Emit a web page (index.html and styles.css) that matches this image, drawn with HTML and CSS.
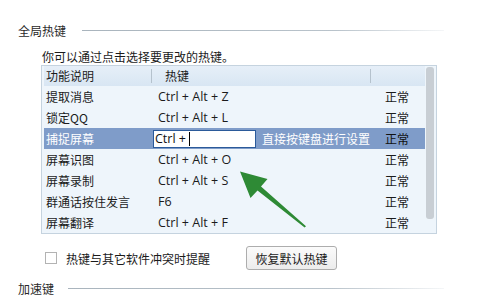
FILE: index.html
```html
<!DOCTYPE html>
<html lang="zh-CN">
<head>
<meta charset="utf-8">
<link rel="stylesheet" href="styles.css">
</head>
<body>
<div class="page">
  <div class="group-head first"><span class="group-title">全局热键</span><span class="group-line"></span></div>
  <div class="hint">你可以通过点击选择要更改的热键。</div>
  <div class="table">
    <div class="list">
      <div class="thead">
        <div class="hc c1">功能说明</div>
        <div class="hc c2">热键</div>
        <div class="hc c3"></div>
      </div>
      <div class="row"><div class="c1">提取消息</div><div class="c2 key">Ctrl + Alt + Z</div><div class="c3">正常</div></div>
      <div class="row"><div class="c1">锁定QQ</div><div class="c2 key">Ctrl + Alt + L</div><div class="c3">正常</div></div>
      <div class="row selected"><div class="c1">捕捉屏幕</div><div class="c2 editcell"><div class="edit"><span class="key">Ctrl + </span><span class="caret"></span></div><span class="edit-tip">直接按键盘进行设置</span></div><div class="c3">正常</div></div>
      <div class="row"><div class="c1">屏幕识图</div><div class="c2 key">Ctrl + Alt + O</div><div class="c3">正常</div></div>
      <div class="row"><div class="c1">屏幕录制</div><div class="c2 key">Ctrl + Alt + S</div><div class="c3">正常</div></div>
      <div class="row"><div class="c1">群通话按住发言</div><div class="c2 key">F6</div><div class="c3">正常</div></div>
      <div class="row"><div class="c1">屏幕翻译</div><div class="c2 key">Ctrl + Alt + F</div><div class="c3">正常</div></div>
    </div>
    <div class="scrollbar"><div class="thumb"></div></div>
  </div>
  <div class="options">
    <label class="check"><span class="box"></span><span>热键与其它软件冲突时提醒</span></label>
    <button class="btn">恢复默认热键</button>
  </div>
  <div class="group-head second"><span class="group-title">加速键</span><span class="group-line"></span></div>
  <svg class="arrow" width="485" height="298" viewBox="0 0 485 298">
    <polygon points="240,148.5 267.5,156 261,163.5 306,203.2 304.6,204.6 257.5,167.5 250.5,175" fill="#2e8a35"/>
  </svg>
</div>
</body>
</html>
```
FILE: styles.css
```css
* { box-sizing: border-box; }
html, body { margin: 0; padding: 0; background: #fff; }
body {
  font-family: "Noto Sans CJK SC", sans-serif;
  font-size: 12px;
  color: #1b1b1b;
  width: 485px;
  height: 298px;
  overflow: hidden;
}
.page { position: relative; width: 485px; height: 298px; }

.group-head {
  display: flex;
  align-items: center;
  height: 16px;
  line-height: 16px;
  padding-left: 18px;
}
.group-head.first { margin-top: 23px; }
.group-head.second { margin-top: 11px; }
.group-title { color: #2a2a2a; white-space: nowrap; }
.group-line {
  flex: none;
  height: 1px;
  background: linear-gradient(to right, #a9b4bd 0%, #b9c3cb 70%, rgba(220,226,231,0.3) 100%);
}
.first .group-line { margin-left: 16px; width: 362px; margin-top: -2px; }
.second .group-line { margin-left: 14px; width: 376px; margin-top: -2px; }

.hint {
  margin-top: 10px;
  padding-left: 42px;
  height: 16px;
  line-height: 16px;
}

.table {
  margin-left: 41px;
  width: 396px;
  height: 169px;
  border: 1px solid #c5d3df;
  background: #eef5fb;
  display: flex;
}
.list { flex: 1; padding-left: 2px; }
.thead {
  display: flex;
  height: 20px;
  align-items: center;
  background: linear-gradient(to bottom, #e6eff8, #d8e6f3);
}
.hc { height: 20px; line-height: 20px; position: relative; }
.thead .c1 { padding-left: 2px; }
.thead .c2 { padding-left: 14px; }
.thead .c2::before, .thead .c3::before {
  content: "";
  position: absolute;
  left: 0;
  top: 3px;
  width: 1px;
  height: 14px;
  background: #b5c2cd;
}
.row {
  display: flex;
  height: 21px;
  line-height: 21px;
  align-items: center;
}
.c1 { width: 107px; padding-left: 2px; white-space: nowrap; }
.c2 { width: 219px; padding-left: 7px; white-space: nowrap; }
.c3 { width: 55px; padding-left: 15px; white-space: nowrap; }
.key { font-family: "Open Sans", "Noto Sans", sans-serif; font-size: 12.5px; }
.row.selected { background: #7f9cc9; }
.row.selected .c1 { color: #fff; }
.row.selected .c3 { color: #111; }
.editcell { display: flex; align-items: center; padding-left: 2px; }
.edit {
  width: 107px;
  height: 18px;
  background: #fff;
  border: 1px solid #2b5a9a;
  display: flex;
  align-items: center;
  padding-left: 1px;
  line-height: 16px;
  color: #111;
}
.caret { width: 1px; height: 14px; background: #000; margin-left: 3px; }
.edit-tip { color: #fff; margin-left: 6px; }

.scrollbar {
  width: 11px;
  padding: 1px 2px 0 1px;
}
.thumb {
  width: 8px;
  height: 152px;
  background: #c8ced4;
  border-radius: 3px;
}

.options {
  display: flex;
  align-items: center;
  margin-top: 12px;
  height: 24px;
}
.check {
  display: flex;
  align-items: center;
  margin-left: 45px;
  width: 201px;
}
.box {
  width: 12px;
  height: 12px;
  border: 1px solid #b3b3b3;
  background: #fff;
  margin-right: 9px;
}
.btn {
  width: 91px;
  height: 24px;
  padding: 0;
  margin: 0;
  font: inherit;
  color: #1b1b1b;
  background: linear-gradient(to bottom, #fbfbfb, #ececec);
  border: 1px solid #adadad;
  border-radius: 3px;
}

.arrow { position: absolute; left: 0; top: 0; pointer-events: none; }
```
